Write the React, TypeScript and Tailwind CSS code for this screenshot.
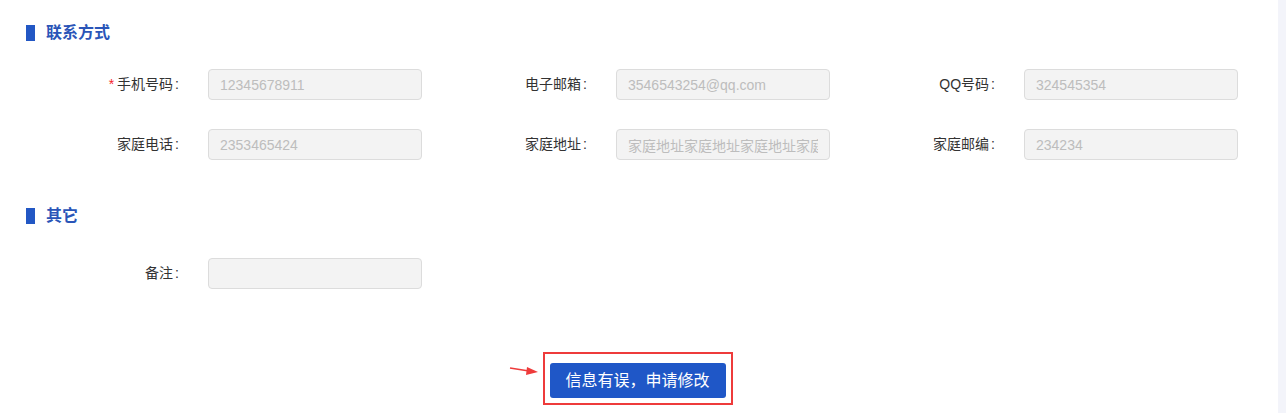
import React from 'react'

const font = { fontFamily: '"Liberation Sans", "Noto Sans CJK SC", sans-serif' }

type Field = { label: string; value: string; required?: boolean }

const contactRows: Field[][] = [
  [
    { label: '手机号码', value: '12345678911', required: true },
    { label: '电子邮箱', value: '3546543254@qq.com' },
    { label: 'QQ号码', value: '324545354' },
  ],
  [
    { label: '家庭电话', value: '2353465424' },
    { label: '家庭地址', value: '家庭地址家庭地址家庭地址家庭地址' },
    { label: '家庭邮编', value: '234234' },
  ],
]

const SectionTitle = ({ title }: { title: string }) => (
  <div className="flex items-center h-[32px] pl-[26px]">
    <span className="w-[9px] h-[16px] bg-[#2257c4]" />
    <h3 className="ml-[11px] text-[16px] font-bold text-[#2a55b8] leading-none">{title}</h3>
  </div>
)

const FieldCell = ({ field }: { field: Field }) => (
  <div className="w-[408px] flex items-center">
    <label className="w-[166px] text-right text-[14px] text-[#333] whitespace-nowrap">
      {field.required && <span className="text-[#f5222d] mr-[3px]">*</span>}
      {field.label}
      <span className="ml-[2px] mr-[1px]">:</span>
    </label>
    <input
      disabled
      value={field.value}
      readOnly
      className="ml-[28px] w-[214px] h-[31px] px-[11px] bg-[#f3f3f3] border border-[#dcdcdc] rounded-[4px] text-[14px] text-[#bdbdbd] outline-none"
    />
  </div>
)

const App = () => {
  return (
    <div className="w-[1286px] h-[413px] flex overflow-hidden bg-white" style={font}>
      <div className="w-[1278px] flex flex-col">
        <div className="pt-[17px]">
          <SectionTitle title="联系方式" />
          <div className="pl-[14px] mt-[20px] flex flex-col gap-[29px]">
            {contactRows.map((row, ind) => (
              <div key={ind} className="flex">
                {row.map((f, i) => (
                  <FieldCell key={i} field={f} />
                ))}
              </div>
            ))}
          </div>
        </div>
        <div className="mt-[40px]">
          <SectionTitle title="其它" />
          <div className="pl-[14px] mt-[26px] flex">
            <FieldCell field={{ label: '备注', value: '' }} />
          </div>
        </div>
        <div className="mt-[63px] flex justify-center items-center">
          <div className="relative border-2 border-[#ee3b3b] px-[5px] pt-[9px] pb-[5px] ml-[-3px]">
            <svg className="absolute left-[-36px] top-[12px]" width="30" height="10" viewBox="0 0 30 10">
              <path d="M1 2 L20 5" stroke="#ee3b3b" strokeWidth="1.6" fill="none" />
              <path d="M18 1 L29 6 L17 9 Z" fill="#ee3b3b" />
            </svg>
            <button className="w-[176px] h-[35px] bg-[#1f57c7] rounded-[3px] text-white text-[16px]">
              信息有误，申请修改
            </button>
          </div>
        </div>
      </div>
      <div className="w-[8px] bg-[#f3f4fa]" />
    </div>
  )
}

export default App
